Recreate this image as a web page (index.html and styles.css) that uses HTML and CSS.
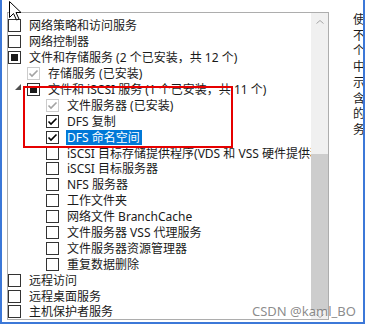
FILE: index.html
```html
<!DOCTYPE html>
<html lang="zh-CN">

<head>
    <meta charset="UTF-8">
    <title>服务器角色</title>
    <link rel="stylesheet" href="styles.css">
</head>

<body>
    <div class="frame">
        <div class="list">
            <div class="rows">
                <div class="row"><span class="cb"></span><span class="label">网络策略和访问服务</span></div>
                <div class="row"><span class="cb"></span><span class="label">网络控制器</span></div>
                <div class="row"><span class="cb cb-mixed"><i></i></span><span class="label">文件和存储服务 (2 个已安装，共 12 个)</span></div>
                <div class="row lv1"><span class="cb cb-dis"><svg viewBox="0 0 11 11"><path d="M1.5 5.5 4 8 9.5 2.5"/></svg></span><span class="label">存储服务 (已安装)</span></div>
                <div class="row lv1-exp"><span class="exp"><svg viewBox="0 0 6 6"><path d="M6 0 6 6 0 6Z"/></svg></span><span class="cb cb-mixed"><i></i></span><span class="label">文件和 iSCSI 服务 (1 个已安装，共 11 个)</span></div>
                <div class="row lv2"><span class="cb cb-dis"><svg viewBox="0 0 11 11"><path d="M1.5 5.5 4 8 9.5 2.5"/></svg></span><span class="label">文件服务器 (已安装)</span></div>
                <div class="row lv2"><span class="cb cb-on"><svg viewBox="0 0 11 11"><path d="M1.5 5.5 4 8 9.5 2.5"/></svg></span><span class="label">DFS 复制</span></div>
                <div class="row lv2"><span class="cb cb-on"><svg viewBox="0 0 11 11"><path d="M1.5 5.5 4 8 9.5 2.5"/></svg></span><span class="label sel">DFS 命名空间</span></div>
                <div class="row lv2"><span class="cb"></span><span class="label">iSCSI 目标存储提供程序(VDS 和 VSS 硬件提供程序)</span></div>
                <div class="row lv2"><span class="cb"></span><span class="label">iSCSI 目标服务器</span></div>
                <div class="row lv2"><span class="cb"></span><span class="label">NFS 服务器</span></div>
                <div class="row lv2"><span class="cb"></span><span class="label">工作文件夹</span></div>
                <div class="row lv2"><span class="cb"></span><span class="label">网络文件 BranchCache</span></div>
                <div class="row lv2"><span class="cb"></span><span class="label">文件服务器 VSS 代理服务</span></div>
                <div class="row lv2"><span class="cb"></span><span class="label">文件服务器资源管理器</span></div>
                <div class="row lv2"><span class="cb"></span><span class="label">重复数据删除</span></div>
                <div class="row"><span class="cb"></span><span class="label">远程访问</span></div>
                <div class="row"><span class="cb"></span><span class="label">远程桌面服务</span></div>
                <div class="row"><span class="cb"></span><span class="label">主机保护者服务</span></div>
            </div>
            <div class="scrollbar">
                <div class="sb-btn"><svg viewBox="0 0 8 4"><path d="M0.5 3.5 4 0.5 7.5 3.5"/></svg></div>
                <div class="sb-track"><div class="sb-thumb"></div></div>
                <div class="sb-btn sb-down"><svg viewBox="0 0 8 4"><path d="M0.5 0.5 4 3.5 7.5 0.5"/></svg></div>
            </div>
        </div>
        <div class="desc"><span>使不个中示含的务</span></div>
    </div>

    <!-- 标注框和鼠标 -->
    <div class="mark"></div>
    <svg class="cursor" viewBox="0 0 13 20" width="13" height="20">
        <path d="M0.5 0.5 0.5 16.5 4.5 12.5 7.5 19 10 18 7 11.5 12 11.5Z" />
    </svg>
    <div class="watermark">CSDN @kaml_BO</div>
</body>

</html>
```

FILE: styles.css
```css
body {
    margin: 0;
    position: relative;
    background: #fff;
    font-family: "Noto Sans", "Noto Sans CJK SC", sans-serif;
    font-size: 12px;
    color: #1a1a1a;
}

.frame {
    width: 365px;
    height: 324px;
    box-sizing: border-box;
    border-left: 2px solid #3c78d8;
    border-right: 2px solid #3c78d8;
    border-bottom: 2px solid #3c78d8;
    padding: 12px 0 0 5px;
    display: flex;
    align-items: flex-start;
    overflow: hidden;
}

.list {
    width: 322px;
    height: 308px;
    box-sizing: border-box;
    border: 1px solid #adadad;
    display: flex;
    flex-shrink: 0;
}

.rows {
    flex: 1;
    min-width: 0;
    padding-top: 5px;
    overflow: hidden;
}

.row {
    height: 15.9px;
    display: flex;
    align-items: center;
    white-space: nowrap;
}

.lv1 {
    padding-left: 19px;
}

.lv1-exp {
    padding-left: 7px;
}

.lv2 {
    padding-left: 38px;
}

.exp {
    width: 6px;
    height: 6px;
    margin: 0 6px 5px 0;
    display: flex;
}

.exp svg {
    width: 6px;
    height: 6px;
    fill: #505050;
}

.cb {
    width: 13px;
    height: 13px;
    box-sizing: border-box;
    border: 1px solid #333;
    background: #fff;
    flex-shrink: 0;
    display: flex;
    align-items: center;
    justify-content: center;
}

.cb svg {
    width: 11px;
    height: 11px;
    fill: none;
    stroke: #000;
    stroke-width: 1.6;
}

.cb-dis {
    border-color: #cccccc;
}

.cb-dis svg {
    stroke: #a3a3a3;
}

.cb-mixed i {
    width: 7px;
    height: 7px;
    background: #1a1a1a;
}

.label {
    margin-left: 7px;
    padding: 0 1px;
    line-height: 15px;
}

.sel {
    background: #0078d7;
    color: #fff;
    padding-right: 2px;
}

.scrollbar {
    width: 17px;
    background: #f0f0f0;
    display: flex;
    flex-direction: column;
}

.sb-btn {
    height: 17px;
    display: flex;
    align-items: center;
    justify-content: center;
}

.sb-btn svg {
    width: 8px;
    height: 4px;
    fill: none;
    stroke: #a6a6a6;
    stroke-width: 1;
}

.sb-down {
    height: 8px;
    align-items: flex-end;
    padding-bottom: 1px;
}

.sb-track {
    flex: 1;
    padding-top: 124px;
    display: flex;
    flex-direction: column;
}

.sb-thumb {
    flex: 1;
    background: #cdcdcd;
}

.desc {
    margin-left: 24px;
    width: 10px;
    overflow: hidden;
    line-height: 15.7px;
    flex-shrink: 0;
}

.desc span {
    display: block;
    width: 12px;
}

.mark {
    position: absolute;
    left: 23px;
    top: 86px;
    width: 210px;
    height: 62px;
    box-sizing: border-box;
    border: 2px solid #e60000;
}

.cursor {
    position: absolute;
    left: 9px;
    top: 1px;
    fill: #fff;
    stroke: #000;
    stroke-width: 1;
}

.watermark {
    position: absolute;
    left: 252px;
    top: 302px;
    font-size: 13px;
    color: rgba(110, 110, 110, 0.8);
    white-space: nowrap;
}
```
